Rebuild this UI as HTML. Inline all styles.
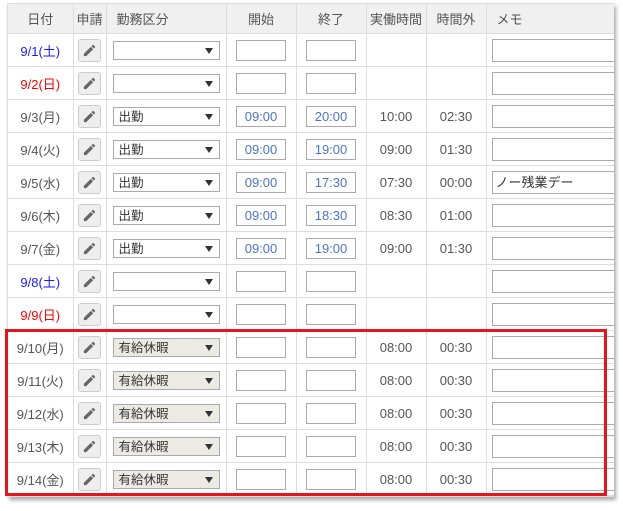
<!DOCTYPE html>
<html><head><meta charset="utf-8"><style>
body{margin:0;width:623px;height:511px;background:#fff;overflow:hidden;font-family:"Liberation Sans","Noto Sans CJK JP",sans-serif;font-size:13px;color:#555;position:relative}
.wrap{position:absolute;left:7px;top:3px;width:606px;height:492px;border:1px solid #ddd;border-right:none;box-shadow:2px 3px 4px rgba(0,0,0,.35);overflow:hidden;background:#fff}
table{border-collapse:collapse;table-layout:fixed;width:640px}
td,th{border:1px solid #ddd;height:32px;padding:0;text-align:center;font-weight:normal}
th{background:#f0f0f0;height:29px;color:#555;font-size:13px}
tr td:first-child,tr th:first-child{border-left:none}
tr:first-child th{border-top:none}
.pen{display:inline-block;width:21px;height:21px;border:1px solid #ccc;border-radius:3px;background:#eee;vertical-align:middle;position:relative}
.pen svg{position:absolute;left:3px;top:3px}
.sel{display:inline-block;width:107px;height:19px;border:1px solid #aaa;background:#fff;position:relative;text-align:left;line-height:19px;padding-left:5px;box-sizing:border-box;vertical-align:middle;font-size:12.5px;color:#333}
.sel.g{background:#ebeae3}
.sel:after{content:"";position:absolute;right:6px;top:6px;border-left:4px solid transparent;border-right:4px solid transparent;border-top:6px solid #333}
.in{display:inline-block;width:50px;height:21px;border:1px solid #aaa;box-sizing:border-box;vertical-align:middle;line-height:19px;color:#4a74c9;font-size:13px}
.memo{display:block;margin-left:5px;width:140px;height:23px;border:1px solid #aaa;box-sizing:border-box;text-align:left;padding-left:3px;line-height:21px;font-size:13px;color:#333}
.b{color:#1a1aff}.r{color:#f00}
.red{position:absolute;left:5px;top:329px;width:596px;height:161px;border:3px solid #e8141c}
</style></head><body>
<div class="wrap"><table>
<colgroup><col style="width:65px"><col style="width:33px"><col style="width:120px"><col style="width:70px"><col style="width:70px"><col style="width:60px"><col style="width:60px"><col style="width:162px"></colgroup>
<tr><th>日付</th><th>申請</th><th style="text-align:left;padding-left:10px">勤務区分</th><th>開始</th><th>終了</th><th>実働時間</th><th>時間外</th><th style="text-align:left;padding-left:10px">メモ</th></tr>
<tbody id="b"></tbody>
</table></div>
<div class="red"></div>
<script>
var rows=[["9/1(土)","b","","","","","",""],["9/2(日)","r","","","","","",""],["9/3(月)","","出勤","09:00","20:00","10:00","02:30",""],["9/4(火)","","出勤","09:00","19:00","09:00","01:30",""],["9/5(水)","","出勤","09:00","17:30","07:30","00:00","ノー残業デー"],["9/6(木)","","出勤","09:00","18:30","08:30","01:00",""],["9/7(金)","","出勤","09:00","19:00","09:00","01:30",""],["9/8(土)","b","","","","","",""],["9/9(日)","r","","","","","",""],["9/10(月)","","有給休暇","","","08:00","00:30",""],["9/11(火)","","有給休暇","","","08:00","00:30",""],["9/12(水)","","有給休暇","","","08:00","00:30",""],["9/13(木)","","有給休暇","","","08:00","00:30",""],["9/14(金)","","有給休暇","","","08:00","00:30",""]];
var pen='<span class="pen"><svg width="15" height="15" viewBox="0 0 24 24"><path fill="#666" d="M3 17.25V21h3.75L17.8 9.94l-3.75-3.75L3 17.25zM20.7 7.04a1 1 0 000-1.41l-2.34-2.34a1 1 0 00-1.41 0l-1.830 1.83 3.75 3.75 1.83-1.83z"/></svg></span>';
var h="";rows.forEach(function(r){var g=r[2]=="有給休暇"?" g":"";
h+='<tr><td class="'+r[1]+'">'+r[0]+'</td><td>'+pen+'</td><td><span class="sel'+g+'">'+r[2]+'</span></td><td><span class="in">'+r[3]+'</span></td><td><span class="in">'+r[4]+'</span></td><td>'+r[5]+'</td><td>'+r[6]+'</td><td><span class="memo">'+r[7]+'</span></td></tr>';});
document.getElementById("b").innerHTML=h;
</script>
</body></html>
